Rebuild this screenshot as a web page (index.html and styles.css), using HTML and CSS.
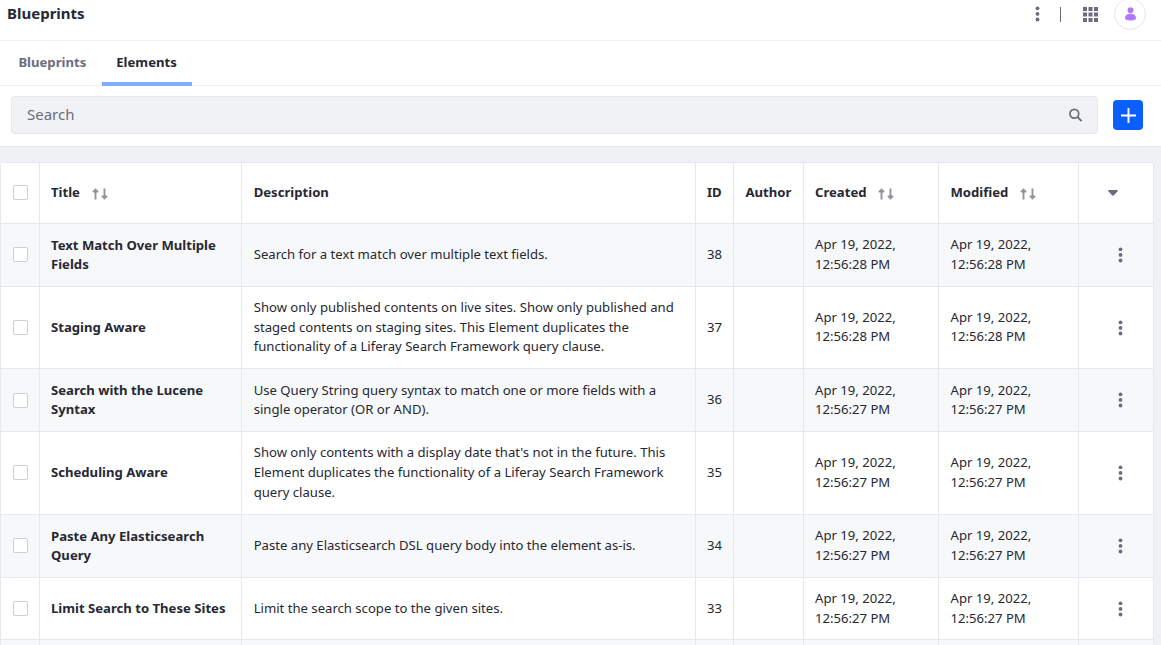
FILE: index.html
```html
<!DOCTYPE html>
<html lang="en">
<head>
<meta charset="utf-8">
<title>Blueprints</title>
<link rel="stylesheet" href="styles.css">
</head>
<body>
<svg class="sprite" aria-hidden="true">
  <symbol id="dots" viewBox="0 0 6 16"><circle cx="3.500" cy="2.300" r="1.900"/><circle cx="3.500" cy="7.900" r="1.900"/><circle cx="3.500" cy="13.500" r="1.900"/></symbol>
  <symbol id="sort" viewBox="0 0 16 12"><path d="M3.500 11.500V2M12.500 .5V10" fill="none" stroke="currentColor" stroke-width="1.900"/><path d="M3.500 .2 6.700 3.500 5.800 4.500H1.200L.3 3.500zM12.500 11.800 15.700 8.500 14.800 7.500H10.200L9.300 8.500z"/></symbol>
</svg>
<header class="header">
  <h1 class="header-title">Blueprints</h1>
  <svg class="header-dots" viewBox="0 0 6 16"><use href="#dots"/></svg>
  <span class="divider"></span>
  <svg class="apps" viewBox="0 0 15 15"><path d="M0 0h4v4H0zM5.500 0h4v4h-4zM11 0h4v4h-4zM0 5.500h4v4H0zM5.500 5.500h4v4h-4zM11 5.500h4v4h-4zM0 11h4v4H0zM5.500 11h4v4h-4zM11 11h4v4h-4z"/></svg>
  <span class="avatar"><svg class="avatar-icon" viewBox="0 0 12 14"><circle cx="6.500" cy="3.200" r="2.900"/><path d="M6.500 6.700c3.500 0 5.500 2 5.500 4.200 0 1.800-2.500 2.500-5.500 2.500S1 12.700 1 10.900c0-2.200 2-4.200 5.500-4.200z"/></svg></span>
</header>
<nav class="tabs">
  <a class="tab">Blueprints</a>
  <a class="tab active">Elements</a>
</nav>
<div class="toolbar">
  <div class="search"><span>Search</span><svg class="search-icon" viewBox="0 0 14 14"><circle cx="5.300" cy="5.800" r="4.400" fill="none" stroke="currentColor" stroke-width="1.700"/><path d="M8.400 8.900l4.200 4.200" stroke="currentColor" stroke-width="2"/></svg></div>
  <button class="add" aria-label="Add"><svg class="add-icon" viewBox="0 0 15 15"><path d="M7.500 0v15M0 7.500h15" stroke="#fff" stroke-width="1.900"/></svg></button>
</div>
<main class="table">
  <div class="row head">
    <div class="cell check"><i class="box"></i></div>
    <div class="cell">Title<svg class="sort"><use href="#sort"/></svg></div>
    <div class="cell desc">Description</div>
    <div class="cell">ID</div>
    <div class="cell author">Author</div>
    <div class="cell">Created<svg class="sort sort-created"><use href="#sort"/></svg></div>
    <div class="cell modified">Modified<svg class="sort"><use href="#sort"/></svg></div>
    <div class="cell caret-cell"><svg class="caret" viewBox="0 0 10 6"><path d="M.8 0h8.400q1.100.3.400 1.200L5.700 5.400q-.7.700-1.400 0L.4 1.200Q-.3.300.8 0z"/></svg></div>
  </div>
  <div class="row shaded">
    <div class="cell check"><i class="box"></i></div>
    <div class="cell name">Text Match Over Multiple<br>Fields</div>
    <div class="cell desc">Search for a text match over multiple text fields.</div>
    <div class="cell">38</div><div class="cell"></div>
    <div class="cell">Apr 19, 2022,<br>12:56:28 PM</div>
    <div class="cell modified">Apr 19, 2022,<br>12:56:28 PM</div>
    <div class="cell menu"><svg class="dots"><use href="#dots"/></svg></div>
  </div>
  <div class="row mid">
    <div class="cell check"><i class="box"></i></div>
    <div class="cell name">Staging Aware</div>
    <div class="cell desc">Show only published contents on live sites. Show only published and<br>staged contents on staging sites. This Element duplicates the<br>functionality of a Liferay Search Framework query clause.</div>
    <div class="cell">37</div><div class="cell"></div>
    <div class="cell raised">Apr 19, 2022,<br>12:56:28 PM</div>
    <div class="cell modified raised">Apr 19, 2022,<br>12:56:28 PM</div>
    <div class="cell menu low"><svg class="dots"><use href="#dots"/></svg></div>
  </div>
  <div class="row shaded">
    <div class="cell check low"><i class="box"></i></div>
    <div class="cell name">Search with the Lucene<br>Syntax</div>
    <div class="cell desc compact">Use Query String query syntax to match one or more fields with a<br>single operator (OR or AND).</div>
    <div class="cell">36</div><div class="cell"></div>
    <div class="cell compact">Apr 19, 2022,<br>12:56:27 PM</div>
    <div class="cell modified compact">Apr 19, 2022,<br>12:56:27 PM</div>
    <div class="cell menu low"><svg class="dots"><use href="#dots"/></svg></div>
  </div>
  <div class="row tall">
    <div class="cell check"><i class="box"></i></div>
    <div class="cell name raised">Scheduling Aware</div>
    <div class="cell desc">Show only contents with a display date that's not in the future. This<br>Element duplicates the functionality of a Liferay Search Framework<br>query clause.</div>
    <div class="cell">35</div><div class="cell"></div>
    <div class="cell">Apr 19, 2022,<br>12:56:27 PM</div>
    <div class="cell modified">Apr 19, 2022,<br>12:56:27 PM</div>
    <div class="cell menu"><svg class="dots"><use href="#dots"/></svg></div>
  </div>
  <div class="row shaded">
    <div class="cell check"><i class="box"></i></div>
    <div class="cell name">Paste Any Elasticsearch<br>Query</div>
    <div class="cell desc">Paste any Elasticsearch DSL query body into the element as-is.</div>
    <div class="cell">34</div><div class="cell"></div>
    <div class="cell">Apr 19, 2022,<br>12:56:27 PM</div>
    <div class="cell modified">Apr 19, 2022,<br>12:56:27 PM</div>
    <div class="cell menu"><svg class="dots"><use href="#dots"/></svg></div>
  </div>
  <div class="row short">
    <div class="cell check"><i class="box"></i></div>
    <div class="cell name">Limit Search to These Sites</div>
    <div class="cell desc">Limit the search scope to the given sites.</div>
    <div class="cell">33</div><div class="cell"></div>
    <div class="cell">Apr 19, 2022,<br>12:56:27 PM</div>
    <div class="cell modified">Apr 19, 2022,<br>12:56:27 PM</div>
    <div class="cell menu low"><svg class="dots"><use href="#dots"/></svg></div>
  </div>
  <div class="row shaded last">
    <div class="cell"></div><div class="cell"></div><div class="cell"></div><div class="cell"></div><div class="cell"></div><div class="cell"></div><div class="cell"></div><div class="cell"></div>
  </div>
</main>
</body>
</html>
```
FILE: styles.css
```css
* { box-sizing: border-box; }
html, body { height: 645px; overflow: hidden; }
body {
  margin: 0;
  background: #f0f1f5;
  color: #272833;
  font: 13.125px/19.700px "Noto Sans", sans-serif;
}
svg { display: block; flex: none; fill: currentColor; }
.sprite { display: none; }
.header {
  display: flex;
  align-items: center;
  height: 41px;
  padding: 0 15px 12px 7px;
  background: #fff;
  border-bottom: 1px solid #f0f1f4;
  color: #6b6c7e;
}
.header-title { margin: 0 auto 0 0; padding-bottom: 2px; color: #272833; font-size: 15px; line-height: 20px; font-weight: 700; }
.header-dots { width: 6px; height: 16px; }
.divider { width: 1px; height: 15px; margin: 0 22px 0 20px; background: #6b6c7e; }
.apps { width: 15px; height: 15px; }
.avatar {
  display: flex;
  align-items: center;
  justify-content: center;
  width: 32px;
  height: 32px;
  margin: -2px 0 -2px 16px;
  border: 1px solid #e7e7ed;
  border-radius: 50%;
  color: #af78ff;
}
.avatar-icon { width: 12px; height: 14px; overflow: visible; }
.tabs {
  display: flex;
  height: 45px;
  padding-left: 3.400px;
  background: #fff;
  border-bottom: 1px solid #f0f1f4;
}
.tab { width: 98.600px; height: 45px; padding: 12px 0 0 15px; color: #6b6c7e; font-weight: 700; }
.active { width: 90px; padding-left: 14.300px; color: #272833; border-bottom: 4px solid #80acff; }
.toolbar {
  display: flex;
  align-items: center;
  gap: 15px;
  height: 61px;
  padding: 0 18px 2px 11px;
  background: #fff;
  border-bottom: 1px solid #e7e7ed;
}
.search {
  display: flex;
  align-items: center;
  justify-content: space-between;
  flex: 1;
  height: 38px;
  padding: 0 14px 0 15px;
  background: #f1f2f5;
  border: 1px solid #e7e7ed;
  border-radius: 4px;
  color: #6b6c7e;
  font-size: 15px;
}
.search-icon { width: 14px; height: 14px; }
.add {
  display: flex;
  align-items: center;
  justify-content: center;
  width: 30px;
  height: 30px;
  padding: 0;
  border: 0;
  border-radius: 4px;
  background: #0b5fff;
}
.add-icon { width: 15px; height: 15px; }
.table {
  width: 1154px;
  margin-top: 15px;
  background: #fff;
  border-right: 1px solid #e7e7ed;
  border-radius: 4px 4px 0 0;
  overflow: hidden;
}
.row {
  display: grid;
  grid-template-columns: 39px 202px 454px 38px 70px 135px 140px 75px;
  height: 63px;
  border-top: 1px solid #e7e7ed;
}
.head { height: 61px; font-weight: 700; }
.shaded { background: #f7f8f9; }
.mid { height: 82px; }
.tall { height: 83px; }
.short { height: 62px; }
.last { height: 6px; }
.cell {
  display: flex;
  align-items: center;
  padding-left: 11px;
  border-left: 1px solid #e7e7ed;
  white-space: nowrap;
}
.name { font-weight: 700; line-height: 19px; }
.desc { padding-left: 11.700px; }
.author { padding-left: 11.500px; }
.modified { padding-left: 11.500px; }
.compact { line-height: 19px; }
.raised { padding-bottom: 2px; line-height: 19px; }
.check { padding: 0 0 1px 12px; }
.box { width: 15px; height: 15px; background: #fff; border: 1px solid #cdced9; border-radius: 2px; }
.sort { width: 16px; height: 12px; margin: 1px 0 0 12px; color: #939399; }
.sort-created { margin-left: 11.300px; }
.caret-cell { padding-left: 29px; color: #6b6c7e; }
.caret { width: 10px; height: 6px; }
.menu { padding: 0 0 1px 38px; color: #6b6c7e; }
.check.low, .menu.low { padding-bottom: 0; }
.dots { width: 6px; height: 16px; }
```
